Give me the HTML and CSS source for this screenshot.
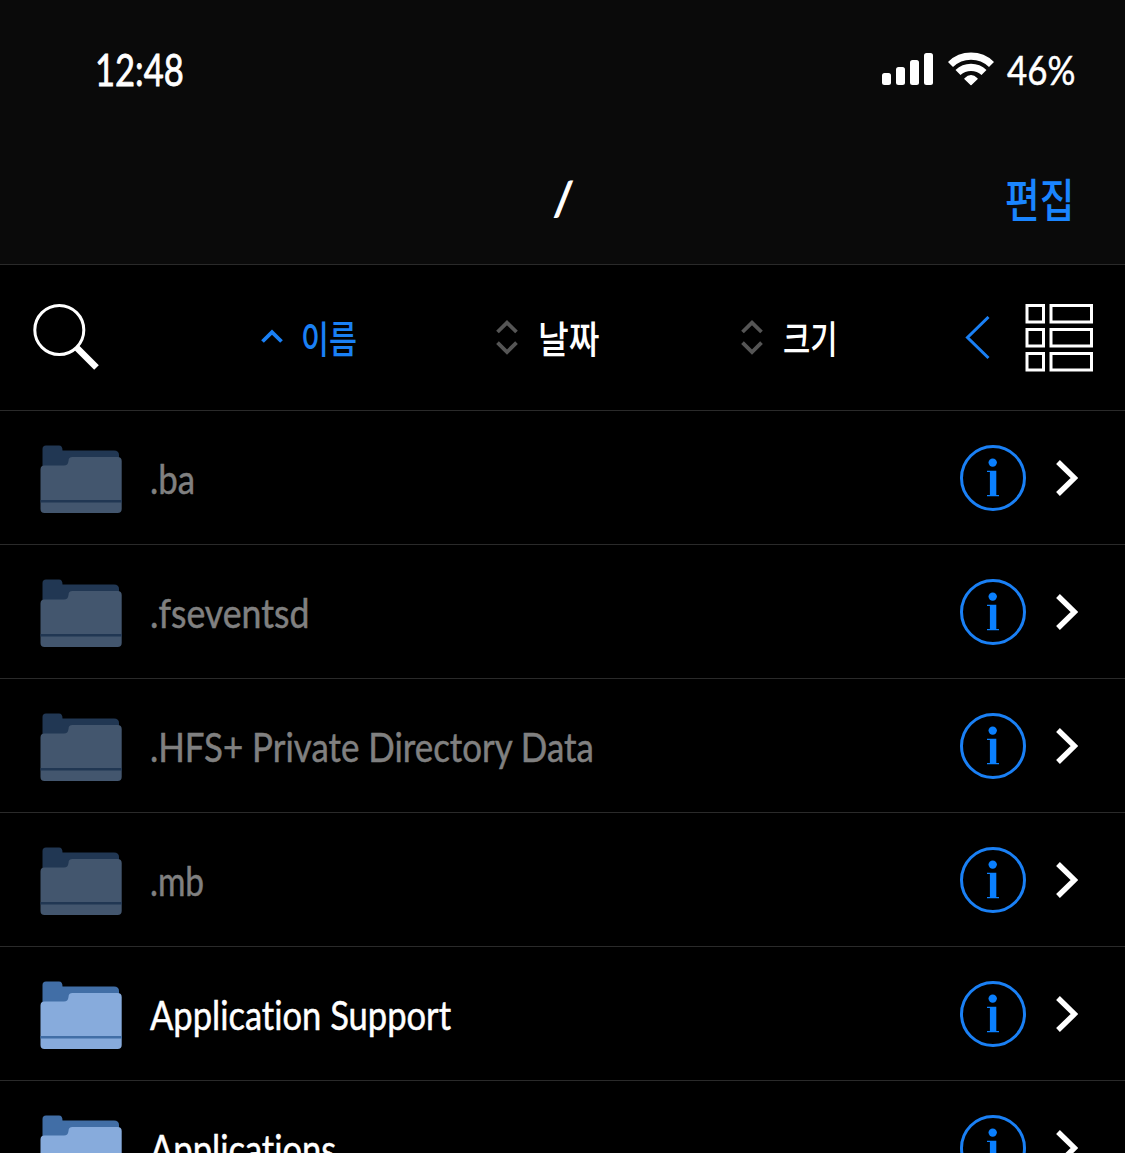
FILE: index.html
```html
<!DOCTYPE html>
<html lang="ko">
<head>
<meta charset="utf-8">
<title>/</title>
<link rel="stylesheet" href="styles.css">
</head>
<body>
<svg class="defs" width="0" height="0">
  <symbol id="folder" viewBox="0 0 82 68">
    <path class="back" d="M2.500 24V4Q2.500 .5 6 .5H19Q22.500 .5 22.500 5.500H74Q79 5.500 79 10V24Z"/>
    <path class="front" d="M.5 24.500Q.5 20.500 4.500 20.500H24Q28 20.500 28.500 16Q28.500 12 32.500 12H77.500Q81.700 12 81.700 16V64Q81.700 68 77.500 68H4.500Q.5 68 .5 64Z"/>
    <path class="back" d="M.5 55H81.700V57.400H.5Z"/>
  </symbol>
  <symbol id="info" viewBox="0 0 66 66">
    <circle cx="33" cy="33" r="31.500" fill="none" stroke="currentColor" stroke-width="3"/>
    <circle class="mark" cx="32.700" cy="17.600" r="4.200"/>
    <path class="mark" d="M27 25.700H36.300V50H39V51.300H27V50H29.900V27H27Z"/>
  </symbol>
  <symbol id="chevron" viewBox="0 0 22 36">
    <path d="M2 2L18.500 18L2 34" fill="none" stroke="currentColor" stroke-width="5.400"/>
  </symbol>
  <symbol id="sort" viewBox="0 0 22 36">
    <path d="M1.500 12L11 2.700L20.500 12M1.500 22.700L11 32L20.500 22.700" fill="none" stroke="currentColor" stroke-width="3.800"/>
  </symbol>
</svg>
<header class="top">
  <div class="status">
    <span class="time">12:48</span>
    <div class="indicators">
      <svg class="signal" viewBox="0 0 51 32"><rect y="20" width="9" height="12" rx="2.500"/><rect x="14" y="14" width="9" height="18" rx="2.500"/><rect x="28" y="7" width="9" height="25" rx="2.500"/><rect x="42" width="9" height="32" rx="2.500"/></svg>
      <svg class="wifi" viewBox="0 0 46 34"><g fill="none" stroke="#fff" stroke-width="7.200"><path d="M2.500 12.500A29.500 29.500 0 0 1 43.500 12.500"/><path d="M10 20.500A18.800 18.800 0 0 1 36 20.500"/></g><path d="M23 32.500L17 26.700Q23 21 29 26.700Z" fill="#fff" stroke="#fff" stroke-width="1.500" stroke-linejoin="round"/></svg>
      <span class="battery">46%</span>
    </div>
  </div>
  <nav class="nav"><h1 class="title">/</h1><span class="edit">편집</span></nav>
</header>
<div class="tools">
  <svg class="search" viewBox="0 0 66 66"><circle cx="26.300" cy="26" r="24.500"/><path d="M43 43L63.500 63.500" stroke-width="6.500"/></svg>
  <div class="sorts">
    <div class="sort name-key active"><svg viewBox="0 0 22 36"><path d="M1.500 21.500L11 12.200L20.500 21.500" fill="none" stroke="currentColor" stroke-width="3.800"/></svg><span>이름</span></div>
    <div class="sort date"><svg><use href="#sort"/></svg><span>날짜</span></div>
    <div class="sort size"><svg><use href="#sort"/></svg><span>크기</span></div>
  </div>
  <svg class="back-arrow" viewBox="0 0 25 44"><path d="M23.500 1L2.500 21.500L23.500 42"/></svg>
  <svg class="list-view" viewBox="0 0 68 68"><path d="M2 1.500H18.500V18H2ZM26 1.500H66.500V18H26ZM2 25.500H18.500V42H2ZM26 25.500H66.500V42H26ZM2 49.500H18.500V66H2ZM26 49.500H66.500V66H26Z"/></svg>
</div>
<main class="files">
  <div class="row hidden"><svg class="folder"><use href="#folder"/></svg><span class="name short">.ba</span><svg class="info"><use href="#info"/></svg><svg class="chevron"><use href="#chevron"/></svg></div>
  <div class="row hidden"><svg class="folder"><use href="#folder"/></svg><span class="name wide">.fseventsd</span><svg class="info"><use href="#info"/></svg><svg class="chevron"><use href="#chevron"/></svg></div>
  <div class="row hidden"><svg class="folder"><use href="#folder"/></svg><span class="name">.HFS+ Private Directory Data</span><svg class="info"><use href="#info"/></svg><svg class="chevron"><use href="#chevron"/></svg></div>
  <div class="row hidden"><svg class="folder"><use href="#folder"/></svg><span class="name narrow">.mb</span><svg class="info"><use href="#info"/></svg><svg class="chevron"><use href="#chevron"/></svg></div>
  <div class="row"><svg class="folder"><use href="#folder"/></svg><span class="name app">Application Support</span><svg class="info"><use href="#info"/></svg><svg class="chevron"><use href="#chevron"/></svg></div>
  <div class="row"><svg class="folder"><use href="#folder"/></svg><span class="name app">Applications</span><svg class="info"><use href="#info"/></svg><svg class="chevron"><use href="#chevron"/></svg></div>
</main>
</body>
</html>
```

FILE: styles.css
```css
* { box-sizing: border-box; }
body {
  margin: 0;
  height: 1153px;
  overflow: hidden;
  background: #000;
  color: #fff;
  font-family: Lato, "Noto Sans CJK KR", sans-serif;
  font-variant-ligatures: none;
}
.defs { display: none; }
svg { display: block; flex: none; }
span { white-space: nowrap; transform-origin: 0 50%; }

.top { height: 265px; background: #0a0a0a; border-bottom: 1px solid #2a2a2a; }
.status { height: 138px; padding: 0 50px 0 95px; display: flex; align-items: center; justify-content: space-between; }
.time { font-size: 44px; line-height: 52px; transform: scaleX(.785); -webkit-text-stroke: .8px; }
.indicators { display: flex; align-items: center; }
.signal { width: 51px; height: 32px; margin-right: 15px; fill: #fff; }
.wifi { width: 46px; height: 34px; margin-right: 13px; }
.battery { width: 68px; padding-top: 2px; font-size: 41px; line-height: 50px; transform: scaleX(.85); -webkit-text-stroke: .5px; }

.nav { height: 124px; padding: 0 52px 0 553px; display: flex; align-items: center; justify-content: space-between; }
.title { margin: 0 0 4px; font-size: 46px; line-height: 56px; font-weight: 400; -webkit-text-stroke: 1.2px; }
.edit { width: 68px; font-size: 46px; line-height: 50px; font-weight: 500; color: #1a85ff; transform: scaleX(.82); }

.tools { height: 146px; padding: 0 32px 0 33px; display: flex; align-items: center; border-bottom: 1px solid #2a2a2a; }
.search { width: 66px; height: 66px; margin-bottom: 1px; fill: none; stroke: #fff; stroke-width: 3; }
.sorts { width: 866px; padding-left: 162px; display: flex; }
.sort { width: 235px; display: flex; align-items: center; gap: 20px; color: #fff; }
.sort.date { width: 245px; }
.sort.size { width: 100px; }
.sort svg { width: 22px; height: 36px; color: #555; }
.sort span { font-size: 38px; line-height: 44px; font-weight: 500; transform: scaleX(.78); }
.sort.name-key { gap: 18px; }
.sort.name-key span { transform: scaleX(.8); }
.sort.date span { transform: scaleX(.88); }
.sort.active, .sort.active svg { color: #1a80f5; }
.back-arrow { width: 25px; height: 44px; margin-right: 35px; fill: none; stroke: #1a80f5; stroke-width: 3; }
.list-view { width: 68px; height: 68px; fill: none; stroke: #fff; stroke-width: 3; }

.files { height: 742px; overflow: hidden; }
.row { height: 134px; padding: 0 47px 0 40px; display: flex; align-items: center; border-bottom: 1px solid #2a2a2a; }
.folder { width: 82px; height: 68px; margin: 2px 28px 0 0; --front: #87abdc; --back: #416ea6; }
.front { fill: var(--front); }
.back { fill: var(--back); }
.hidden .folder { --front: #43566e; --back: #213753; }
.name { flex: 1; padding-top: 2px; font-size: 40px; line-height: 50px; transform: scaleX(.872); -webkit-text-stroke: .5px; }
.name.short { transform: scaleX(.87); }
.name.wide { transform: scaleX(.892); }
.name.narrow { transform: scaleX(.835); }
.name.app { transform: scaleX(.863); }
.hidden .name { color: #808080; }
.info { width: 66px; height: 66px; margin-right: 30px; color: #1a80f5; }
.mark { fill: #0a80ff; }
.chevron { width: 22px; height: 36px; }
```
